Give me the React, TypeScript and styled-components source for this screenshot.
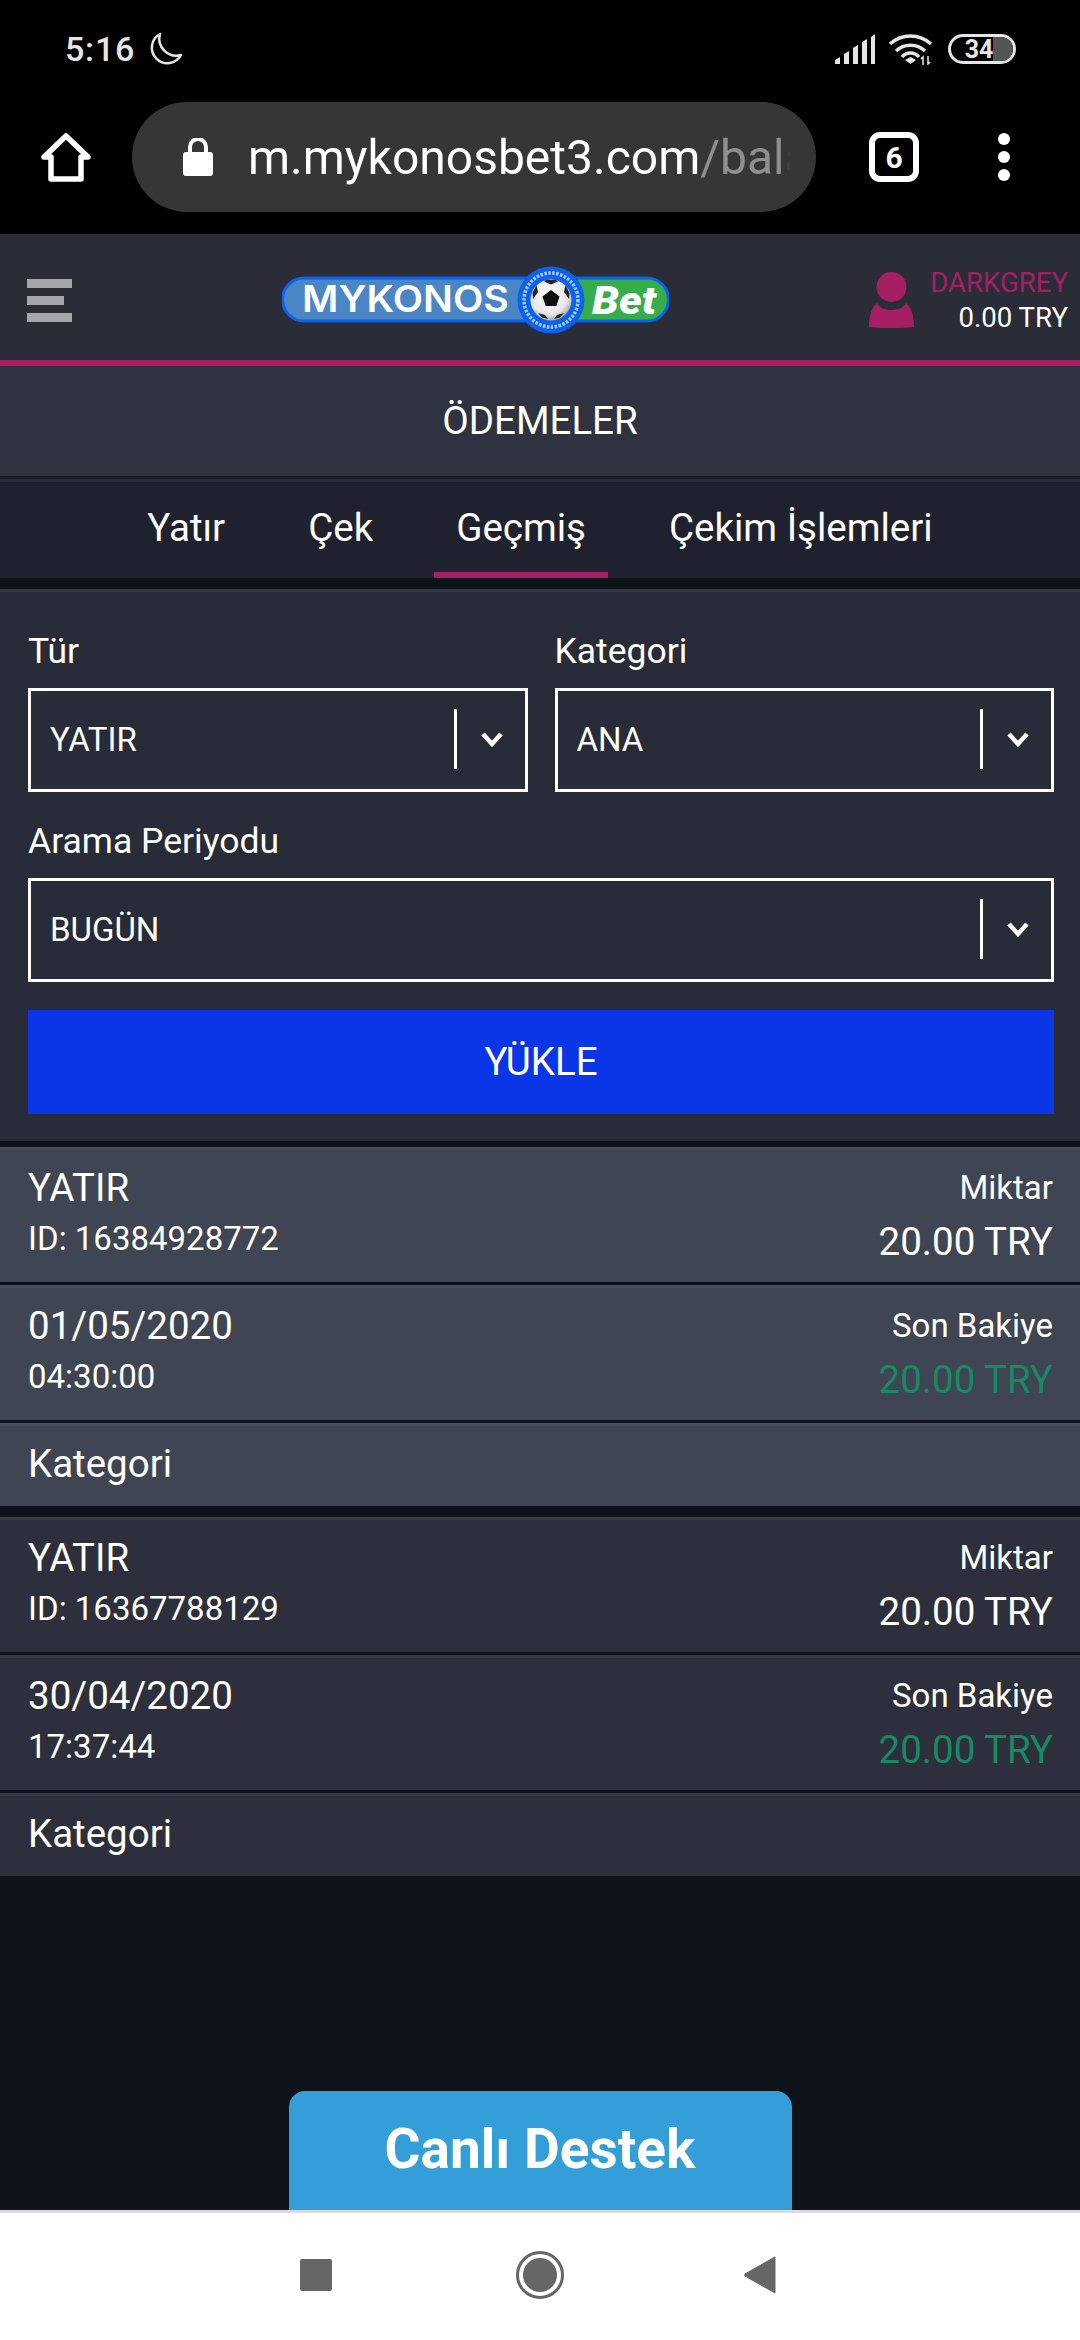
import React from 'react';
import styled, {createGlobalStyle} from 'styled-components';

const GlobalStyle = createGlobalStyle`
  html, body {
    margin: 0;
    padding: 0;
    background: #0e131b;
  }
  * {
    box-sizing: border-box;
  }
`;

const Page = styled.div`
  width: 1080px;
  height: 2340px;
  display: flex;
  flex-direction: column;
  overflow: hidden;
  background: #0e131b;
  color: #fff;
  font-family: Roboto, "Noto Sans", sans-serif;
`;

const StatusBar = styled.div`
  height: 102px;
  padding: 0 64px 4px 65px;
  background: #000;
  display: flex;
  align-items: center;
  justify-content: space-between;
  flex: none;
`;

const Clock = styled.div`
  display: flex;
  align-items: center;
  gap: 13px;
  font-size: 34px;
  font-weight: 500;
  letter-spacing: 0.8px;
  color: #e6e6e6;
`;

const StatusIcons = styled.div`
  display: flex;
  align-items: center;
  gap: 13px;
`;

const Battery = styled.div`
  width: 68px;
  height: 30px;
  border: 3px solid #e6e6e6;
  border-radius: 15px;
  position: relative;
  overflow: hidden;
  display: flex;
  align-items: center;
  justify-content: center;
  font-size: 25px;
  font-weight: 700;
  color: #e6e6e6;

  &::after {
    content: '';
    position: absolute;
    top: 0;
    bottom: 0;
    right: 0;
    width: 20px;
    background: #555;
  }

  span {
    position: relative;
    z-index: 1;
    margin-right: 6px;
  }
`;

const BrowserBar = styled.div`
  height: 132px;
  padding: 0 0 22px 41px;
  background: #000;
  display: flex;
  align-items: center;
  flex: none;
`;

const UrlBox = styled.div`
  width: 684px;
  height: 110px;
  margin-left: 41px;
  padding: 0 26px 0 51px;
  border-radius: 55px;
  background: #363636;
  display: flex;
  align-items: center;
  gap: 35px;
`;

const UrlText = styled.div`
  flex: 1;
  overflow: hidden;
  white-space: nowrap;
  font-size: 48px;
  color: #fff;
  mask-image: linear-gradient(to right, #000 98%, transparent 100%);

  span {
    color: #8f8f8f;
  }
`;

const TabCount = styled.div`
  width: 50px;
  height: 50px;
  margin-left: 53px;
  border: 6px solid #fff;
  border-radius: 11px;
  display: flex;
  align-items: center;
  justify-content: center;
  font-size: 30px;
  font-weight: 700;
`;

const Dots = styled.div`
  margin-left: 79px;
  display: flex;
  flex-direction: column;
  gap: 6px;

  i {
    display: block;
    width: 12px;
    height: 12px;
    border-radius: 50%;
    background: #fff;
  }
`;

const Header = styled.header`
  height: 132px;
  padding: 6px 12px 0 27px;
  background: #2a2d38;
  border-bottom: 6px solid #a61f63;
  display: flex;
  align-items: center;
  flex: none;
`;

const Burger = styled.div`
  width: 45px;
  display: flex;
  flex-direction: column;
  gap: 8px;
`;

const BurgerBar = styled.i<{$short?: boolean}>`
  display: block;
  height: 9px;
  width: ${p => (p.$short ? '37px' : '45px')};
  background: #a5a6ab;
`;

const LogoWrap = styled.div`
  margin-left: 210px;
  width: 387px;
  height: 68px;
  flex: none;
`;

const Account = styled.div`
  margin-left: auto;
  display: flex;
  align-items: center;
  gap: 16px;
`;

const AccountText = styled.div`
  display: flex;
  flex-direction: column;
  align-items: flex-end;
  gap: 2px;
  font-size: 27.6px;
  line-height: 33px;
`;

const AccountName = styled.span`
  color: #a61f63;
`;

const Title = styled.div`
  height: 113px;
  padding-bottom: 2px;
  background: #2f323f;
  border-bottom: 3px solid #1a1d26;
  display: flex;
  align-items: center;
  justify-content: center;
  font-size: 38.5px;
  flex: none;
`;

const Tabs = styled.nav`
  height: 99px;
  background: #1f222e;
  border-top: 3px solid #2a2d38;
  display: flex;
  justify-content: center;
  gap: 39px;
  flex: none;
`;

const Tab = styled.div<{$active?: boolean}>`
  padding: 0 22px;
  display: flex;
  align-items: center;
  font-size: 38.5px;
  border-bottom: 6px solid ${p => (p.$active ? '#a61f63' : 'transparent')};
`;

const FilterPanel = styled.section`
  margin-top: 11px;
  height: 552px;
  padding: 10px 26px 0 28px;
  background: #282b38;
  border-top: 3px solid #353845;
  flex: none;
`;

const FieldRow = styled.div`
  display: flex;
  gap: 27px;
`;

const Field = styled.div`
  flex: 1;
  min-width: 0;
`;

const Label = styled.div`
  height: 86px;
  padding-top: 27px;
  font-size: 35.5px;
  line-height: 44px;
`;

const Select = styled.div`
  height: 104px;
  padding: 0 0 2px 19px;
  border: 3px solid #fff;
  display: flex;
  align-items: center;
  font-size: 33px;
`;

const SelectValue = styled.div`
  flex: 1;
`;

const SelectArrow = styled.div`
  width: 71px;
  height: 60px;
  padding-left: 2px;
  border-left: 3px solid #fff;
  display: flex;
  align-items: center;
  justify-content: center;
`;

const LoadButton = styled.div`
  height: 104px;
  margin-top: 28px;
  padding-bottom: 2px;
  background: #0b36e8;
  display: flex;
  align-items: center;
  justify-content: center;
  font-size: 38.5px;
`;

const Entry = styled.section<{$gap: number}>`
  height: 359px;
  margin-top: ${p => p.$gap}px;
  flex: none;
`;

const EntryRow = styled.div<{$tone: string; $h: number}>`
  height: ${p => p.$h}px;
  padding: 0 27px 5px 28px;
  background: ${p => p.$tone};
  border-top: 3px solid rgba(255, 255, 255, 0.05);
  display: flex;
  align-items: center;
  justify-content: space-between;

  & + & {
    margin-top: 3px;
  }
`;

const Stack = styled.div`
  display: flex;
  flex-direction: column;
  align-items: flex-start;
  gap: 7px;
`;

const AmountStack = styled.div`
  padding-top: 3px;
  display: flex;
  flex-direction: column;
  align-items: flex-end;
  gap: 10px;
`;

const Big = styled.div<{$green?: boolean}>`
  font-size: 38.5px;
  line-height: 44px;
  color: ${p => (p.$green ? '#158a64' : '#fff')};
`;

const Small = styled.div`
  font-size: 33px;
  line-height: 44px;
`;

const Category = styled.div`
  font-size: 38.5px;
`;

const Spacer = styled.div`
  flex: 1;
  display: flex;
  align-items: flex-end;
  justify-content: center;
`;

const ChatTab = styled.div`
  width: 503px;
  height: 119px;
  padding-bottom: 3px;
  border-radius: 16px 16px 0 0;
  background: #349ed8;
  display: flex;
  align-items: center;
  justify-content: center;
  font-size: 55px;
  font-weight: 700;
`;

const SystemNav = styled.div`
  height: 130px;
  background: #fff;
  border-top: 3px solid #dcdcdc;
  display: flex;
  align-items: center;
  justify-content: center;
  gap: 120px;
  flex: none;
`;

const NavIcon = styled.svg`
  width: 104px;
  height: 60px;
  display: block;
  margin-bottom: 4px;
`;

function Chevron() {
  return (
    <svg width="24" height="18" viewBox="0 0 24 18">
      <path d="M3 4l9 10 9-10" fill="none" stroke="#fff" strokeWidth="4.5" />
    </svg>
  );
}

function Logo() {
  return (
    <svg width="387" height="68" viewBox="0 0 387 68" style={{display: 'block'}}>
      <defs>
        <radialGradient id="ball" cx="45%" cy="40%" r="65%">
          <stop offset="0" stopColor="#fff" />
          <stop offset="0.7" stopColor="#e6e6e6" />
          <stop offset="1" stopColor="#9a9a9a" />
        </radialGradient>
      </defs>
      <path d="M22 12H270V55H22a21.5 21.5 0 0 1 0-43z" fill="#4a85c6" stroke="#0a62ee" strokeWidth="3" />
      <path d="M270 12H365a21.5 21.5 0 0 1 0 43H270z" fill="#35ad4d" stroke="#0a62ee" strokeWidth="3" />
      <text
        x="20"
        y="46"
        fontFamily="Inter, Roboto, sans-serif"
        fontSize="37"
        fontWeight="600"
        fill="#fff"
        textLength="207"
        lengthAdjust="spacingAndGlyphs"
      >
        MYKONOS
      </text>
      <text
        x="310"
        y="48"
        fontFamily="Roboto, sans-serif"
        fontSize="38"
        fontWeight="900"
        fontStyle="italic"
        fill="#fff"
        textLength="64"
        lengthAdjust="spacingAndGlyphs"
      >
        Bet
      </text>
      <circle cx="269" cy="34" r="33.500" fill="#0a62ee" />
      <circle cx="269" cy="34" r="27" fill="none" stroke="#a9c8ee" strokeWidth="3.5" strokeDasharray="2.5 1.5" />
      <circle cx="269" cy="34" r="20.500" fill="url(#ball)" />
      <path d="M269 24l8.500 6.500-3.200 9.500h-10.600l-3.200-9.500z" fill="#111" />
      <path
        d="M262 15.500l7 3 7-3-2-1.500h-10zM250.500 27l4-8 1.500 7-5 7zM287.500 27l-4-8-1.500 7 5 7zM256 47l7 2 3 4-6-1.500zM282 47l-7 2-3 4 6-1.500z"
        fill="#222"
      />
    </svg>
  );
}

function HistoryEntry(props: {tone: string; gap: number; id: string; date: string; time: string}) {
  return (
    <Entry $gap={props.gap}>
      <EntryRow $tone={props.tone} $h={135}>
        <Stack>
          <Big>YATIR</Big>
          <Small>ID: {props.id}</Small>
        </Stack>
        <AmountStack>
          <Small>Miktar</Small>
          <Big>20.00 TRY</Big>
        </AmountStack>
      </EntryRow>
      <EntryRow $tone={props.tone} $h={135}>
        <Stack>
          <Big>{props.date}</Big>
          <Small>{props.time}</Small>
        </Stack>
        <AmountStack>
          <Small>Son Bakiye</Small>
          <Big $green>20.00 TRY</Big>
        </AmountStack>
      </EntryRow>
      <EntryRow $tone={props.tone} $h={83}>
        <Category>Kategori</Category>
      </EntryRow>
    </Entry>
  );
}

export default function App() {
  return (
    <Page>
      <GlobalStyle />
      <StatusBar>
        <Clock>
          5:16
          <svg width="35" height="34" viewBox="0 0 35 34">
            <path
              d="M12 2a15.500 15.500 0 1 0 21 21A17 17 0 0 1 12 2z"
              fill="none"
              stroke="#e6e6e6"
              strokeWidth="2.500"
              strokeLinejoin="round"
            />
          </svg>
        </Clock>
        <StatusIcons>
          <svg width="42" height="30" viewBox="0 0 42 30">
            <path
              d="M1 30v-4l5-3v7zM10 30V20l5-3v13zM19 30V14l5-3v19zM28 30V8l5-3v25zM37 30V3l4-3v30z"
              fill="#e6e6e6"
            />
          </svg>
          <svg width="46" height="32" viewBox="0 0 46 32">
            <path
              d="M1 11a30 30 0 0 1 41 0M7 18a21 21 0 0 1 29 0M13 24a11 11 0 0 1 17 0"
              fill="none"
              stroke="#e6e6e6"
              strokeWidth="3.500"
            />
            <path d="M16 27l5.500-3 5.500 3-5.500 4z" fill="#e6e6e6" />
            <path d="M34 32v-8l-2 2M39 23v8l2-2" fill="none" stroke="#e6e6e6" strokeWidth="1.500" />
          </svg>
          <Battery>
            <span>34</span>
          </Battery>
        </StatusIcons>
      </StatusBar>

      <BrowserBar>
        <svg width="50" height="50" viewBox="0 0 50 50">
          <path d="M25 4L3 25h7v22h30V25h7z" fill="none" stroke="#fff" strokeWidth="5.500" strokeLinejoin="round" />
        </svg>
        <UrlBox>
          <svg width="30" height="38" viewBox="0 0 30 38" style={{flex: 'none'}}>
            <rect x="0" y="14" width="30" height="24" rx="3" fill="#fff" />
            <path d="M7 15V9a8 8 0 0 1 16 0v6" fill="none" stroke="#fff" strokeWidth="4" />
          </svg>
          <UrlText>
            m.mykonosbet3.com<span>/bala</span>
          </UrlText>
        </UrlBox>
        <TabCount>6</TabCount>
        <Dots>
          <i />
          <i />
          <i />
        </Dots>
      </BrowserBar>

      <Header>
        <Burger>
          <BurgerBar />
          <BurgerBar $short />
          <BurgerBar />
        </Burger>
        <LogoWrap>
          <Logo />
        </LogoWrap>
        <Account>
          <svg width="45" height="56" viewBox="0 0 45 56">
            <ellipse cx="22.500" cy="15" rx="15" ry="15" fill="#a61f63" />
            <path
              d="M8 31c2 5 9 7 14.500 7S35 36 37 31c5 4 8 12 8 24-7 1.500-38 1.500-45 0C0 43 3 35 8 31z"
              fill="#a61f63"
            />
          </svg>
          <AccountText>
            <AccountName>DARKGREY</AccountName>
            <span>0.00 TRY</span>
          </AccountText>
        </Account>
      </Header>

      <Title>ÖDEMELER</Title>

      <Tabs>
        <Tab>Yatır</Tab>
        <Tab>Çek</Tab>
        <Tab $active>Geçmiş</Tab>
        <Tab>Çekim İşlemleri</Tab>
      </Tabs>

      <FilterPanel>
        <FieldRow>
          <Field>
            <Label>Tür</Label>
            <Select>
              <SelectValue>YATIR</SelectValue>
              <SelectArrow>
                <Chevron />
              </SelectArrow>
            </Select>
          </Field>
          <Field>
            <Label>Kategori</Label>
            <Select>
              <SelectValue>ANA</SelectValue>
              <SelectArrow>
                <Chevron />
              </SelectArrow>
            </Select>
          </Field>
        </FieldRow>
        <Label>Arama Periyodu</Label>
        <Select>
          <SelectValue>BUGÜN</SelectValue>
          <SelectArrow>
            <Chevron />
          </SelectArrow>
        </Select>
        <LoadButton>YÜKLE</LoadButton>
      </FilterPanel>

      <HistoryEntry gap={6} tone="#404553" id="16384928772" date="01/05/2020" time="04:30:00" />
      <HistoryEntry gap={11} tone="#2d303c" id="16367788129" date="30/04/2020" time="17:37:44" />

      <Spacer>
        <ChatTab>Canlı Destek</ChatTab>
      </Spacer>

      <SystemNav>
        <NavIcon viewBox="0 0 104 60">
          <rect x="36" y="14" width="32" height="32" rx="2" fill="#666" />
        </NavIcon>
        <NavIcon viewBox="0 0 104 60">
          <circle cx="52" cy="30" r="22.500" fill="none" stroke="#666" strokeWidth="3" />
          <circle cx="52" cy="30" r="17" fill="#666" />
        </NavIcon>
        <NavIcon viewBox="0 0 104 60">
          <path d="M63 12v36L33 31a2 2 0 0 1 0-2z" fill="#666" stroke="#666" strokeLinejoin="round" />
        </NavIcon>
      </SystemNav>
    </Page>
  );
}
